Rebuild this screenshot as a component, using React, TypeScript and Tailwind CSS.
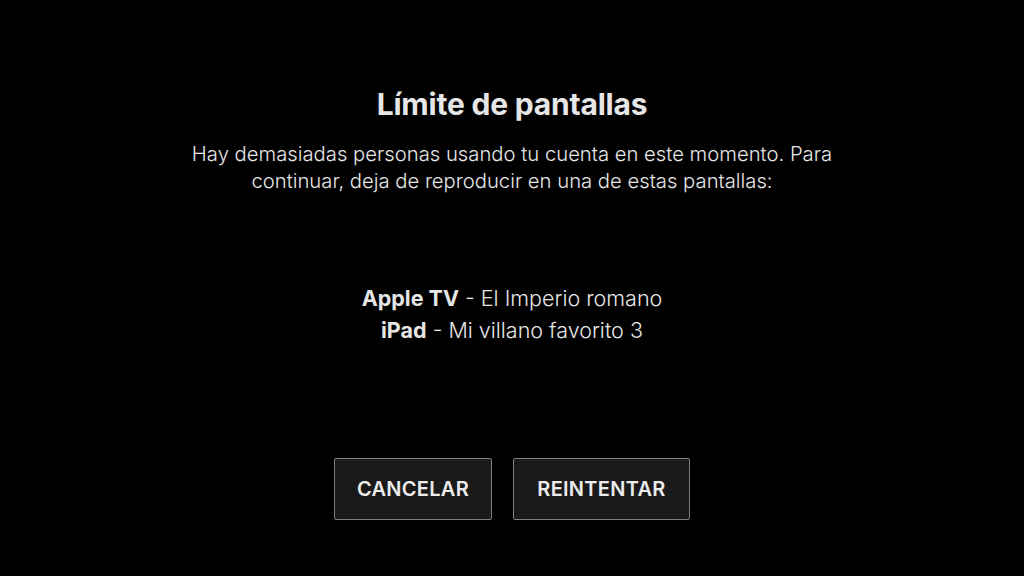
import React from "react"

const devices = [
  { name: "Apple TV", title: "El Imperio romano" },
  { name: "iPad", title: "Mi villano favorito 3" }
]

export default function App() {
  return (
    <main
      className="w-[1024px] h-[576px] bg-black text-[#e6e6e6] flex flex-col items-center"
      style={{ fontFamily: "Inter, 'Noto Sans', sans-serif" }}
    >
      <h1 className="mt-[86px] text-[30px] leading-[36px] font-bold tracking-[-0.2px]">
        Límite de pantallas
      </h1>
      <p className="mt-[18px] w-[700px] text-center text-[20.25px] leading-[27px] font-light">
        Hay demasiadas personas usando tu cuenta en este momento. Para
        continuar, deja de reproducir en una de estas pantallas:
      </p>

      <ul className="mt-[88px] flex flex-col items-center text-[21.5px] leading-[32px] font-light">
        {devices.map((d) => (
          <li key={d.name}>
            <span className="font-bold">{d.name}</span> - {d.title}
          </li>
        ))}
      </ul>

      <div className="mt-[112px] flex gap-[21px]">
        <button className="w-[158px] h-[62px] bg-[#1a1a1a] border border-[#808080] rounded-[2px] text-[20px] font-semibold tracking-[0.3px] text-[#ececec]">
          CANCELAR
        </button>
        <button className="w-[177px] h-[62px] bg-[#1a1a1a] border border-[#808080] rounded-[2px] text-[20px] font-semibold tracking-[0.3px] text-[#ececec]">
          REINTENTAR
        </button>
      </div>
    </main>
  )
}
